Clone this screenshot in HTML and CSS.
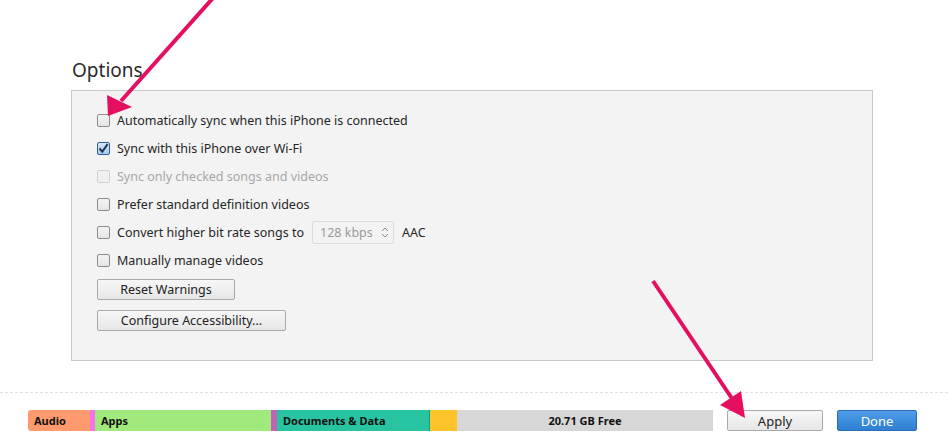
FILE: index.html
```html
<!DOCTYPE html>
<html lang="en">
<head>
  <meta charset="UTF-8">
  <title>Options</title>
  <link rel="stylesheet" href="styles.css">
</head>
<body>
  <div id="page">
    <h2 class="title">Options</h2>
    <div class="panel">
      <label class="row"><span class="box"></span>Automatically sync when this iPhone is connected</label>
      <label class="row"><span class="box checked"><svg viewBox="0 0 13 13" width="13" height="13"><path d="M2.5 6.5 L5.3 9.6 L10.6 2.2" fill="none" stroke="#1d3556" stroke-width="2"/></svg></span>Sync with this iPhone over Wi-Fi</label>
      <label class="row disabled"><span class="box"></span>Sync only checked songs and videos</label>
      <label class="row"><span class="box"></span>Prefer standard definition videos</label>
      <label class="row"><span class="box"></span>Convert higher bit rate songs to
        <span class="select">128 kbps <svg viewBox="0 0 8 11" width="8" height="11"><path d="M1 4 L4 1 L7 4 M1 7 L4 10 L7 7" fill="none" stroke="#8a8a8a" stroke-width="1"/></svg></span>
        <span class="after">AAC</span></label>
      <label class="row"><span class="box"></span>Manually manage videos</label>
      <button class="btn btn-reset">Reset Warnings</button>
      <button class="btn btn-access">Configure Accessibility...</button>
    </div>
    <div class="footer">
      <div class="storage">
        <div class="seg audio">Audio</div>
        <div class="seg photos"></div>
        <div class="seg apps">Apps</div>
        <div class="seg books"></div>
        <div class="seg docs">Documents &amp; Data</div>
        <div class="seg other"></div>
        <div class="seg free">20.71 GB Free</div>
      </div>
      <button class="btn btn-apply">Apply</button>
      <button class="btn btn-done">Done</button>
    </div>
  </div>

  <svg class="arrows" width="948" height="447" viewBox="0 0 948 447">
    <line x1="213" y1="-2" x2="121" y2="101" stroke="#e50f62" stroke-width="4"/>
    <polygon points="107,95 132,107 108,116" fill="#e50f62"/>
    <line x1="653" y1="281" x2="733" y2="400" stroke="#e50f62" stroke-width="4"/>
    <polygon points="720,405 741,391 745,418" fill="#e50f62"/>
  </svg>
</body>
</html>
```

FILE: styles.css
```css
body {
  margin: 0;
  background: #fff;
  font-family: 'Noto Sans', sans-serif;
  color: #222;
}

#page {
  width: 948px;
  height: 447px;
  overflow: hidden;
}

.title {
  margin: 0 0 8px 0;
  padding: 58px 0 0 72px;
  font-weight: normal;
  font-size: 19px;
  line-height: 24px;
  color: #2b2b2b;
}

.panel {
  margin-left: 71px;
  width: 802px;
  height: 271px;
  box-sizing: border-box;
  border: 1px solid #c9c9c9;
  background: #f3f3f3;
  padding: 15px 0 0 25px;
  display: flex;
  flex-direction: column;
  align-items: flex-start;
}

.row {
  display: flex;
  align-items: center;
  height: 28px;
  font-size: 12.5px;
  color: #262626;
}

.row.disabled {
  color: #a8a8a8;
}

.box {
  width: 11px;
  height: 11px;
  border: 1px solid #8c8c8c;
  border-radius: 2px;
  background: linear-gradient(#f4f4f4, #e4e4e4);
  margin-right: 7px;
  position: relative;
}

.disabled .box {
  border-color: #d0d0d0;
  background: #f0f0f0;
}

.box.checked {
  border-color: #2d5f96;
  background: linear-gradient(#d7e6f6, #a9c8ea);
}

.box svg {
  position: absolute;
  left: -1px;
  top: -1px;
}

.select {
  display: flex;
  align-items: center;
  gap: 8px;
  margin-left: 8px;
  width: 82px;
  height: 23px;
  box-sizing: border-box;
  border: 1px solid #dcdcdc;
  border-radius: 2px;
  padding-left: 7px;
  color: #9a9a9a;
  background: #f3f3f3;
}

.after {
  margin-left: 8px;
}

.btn {
  font-family: 'Noto Sans', sans-serif;
  font-size: 12.5px;
  color: #222;
  border: 1px solid #a9a9a9;
  border-radius: 2px;
  background: linear-gradient(#f7f7f7, #e6e6e6);
  padding: 0;
  height: 21px;
  cursor: pointer;
}

.btn-reset {
  margin-top: 5px;
  width: 138px;
}

.btn-access {
  margin-top: 10px;
  width: 189px;
}

.footer {
  margin-top: 31px;
  border-top: 1px dashed #e0e0e0;
  padding: 17px 0 0 28px;
  display: flex;
  align-items: center;
}

.storage {
  display: flex;
  width: 685px;
  height: 21px;
}

.seg {
  height: 21px;
  line-height: 21px;
  font-size: 11px;
  font-weight: bold;
  color: #111;
  box-sizing: border-box;
  white-space: nowrap;
}

.audio { width: 62px; background: #fe9a6e; padding-left: 6px; border-radius: 3px 0 0 3px; }
.photos { width: 5px; background: #f672e8; }
.apps { width: 176px; background: #a0e97c; padding-left: 6px; }
.books { width: 6px; background: #c162b6; }
.docs { width: 153px; background: #28c3a0; padding-left: 6px; border-right: 1px solid #1a9d7d; }
.other { width: 27px; background: #fec52a; }
.free { width: 256px; background: #d7d7d7; text-align: center; }

.btn-apply {
  margin-left: 14px;
  width: 96px;
  font-size: 13px;
}

.btn-done {
  margin-left: 14px;
  width: 80px;
  font-size: 13px;
  color: #fff;
  border-color: #2a6db5;
  background: linear-gradient(#4d9de8, #2f7fd2);
}

.arrows {
  position: absolute;
  left: 0;
  top: 0;
  pointer-events: none;
}
```
